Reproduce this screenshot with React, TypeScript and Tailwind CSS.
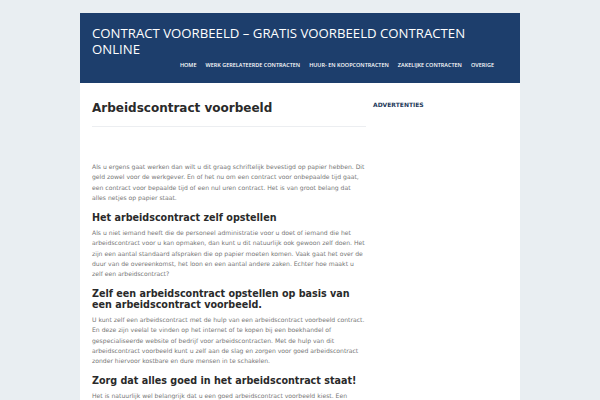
export default function App() {
  const dv = { fontFamily: '"DejaVu Sans", sans-serif' };
  const os = { fontFamily: '"Open Sans", sans-serif' };
  const h3 = "text-[#2a2a2a] text-[9.6px] font-bold leading-[10.7px] mt-[9px] mb-[4.5px]";
  return (
    <div className="w-[600px] h-[400px] bg-[#e9eef2] overflow-hidden">
      <div className="mx-auto w-[440px] pt-[13px]">
        <header className="bg-[#1d3e6c] h-[70px] px-[12px] pt-[13px]" style={os}>
          <h1 className="w-[400px] text-white text-[13.2px] leading-[15.5px] uppercase">
            Contract voorbeeld – Gratis voorbeeld contracten online
          </h1>
          <nav className="flex justify-end gap-[9px] mt-[5px] pr-[14px] text-white text-[5.5px] leading-[7.5px] font-semibold uppercase">
            <span>Home</span>
            <span>Werk gerelateerde contracten</span>
            <span>Huur- en koopcontracten</span>
            <span>Zakelijke contracten</span>
            <span>Overige</span>
          </nav>
        </header>
        <div className="bg-white h-[330px] flex px-[12px] pt-[18px]" style={dv}>
          <main className="w-[274px] shrink-0">
            <h2 className="text-[#2a2a2a] text-[12px] font-bold leading-[14px]">Arbeidscontract voorbeeld</h2>
            <div className="border-b border-[#eceef1] mt-[11px]" />
            <div className="text-[#777] text-[6.1px] leading-[10.4px]">
              <p className="mt-[35px]">
                Als u ergens gaat werken dan wilt u dit graag schriftelijk bevestigd op papier hebben. Dit geld zowel voor de werkgever. En of het nu om een contract voor onbepaalde tijd gaat, een contract voor bepaalde tijd of een nul uren contract. Het is van groot belang dat alles netjes op papier staat.
              </p>
              <h3 className={h3}>Het arbeidscontract zelf opstellen</h3>
              <p className="w-[275.5px]">
                Als u niet iemand heeft die de personeel administratie voor u doet of iemand die het arbeidscontract voor u kan opmaken, dan kunt u dit natuurlijk ook gewoon zelf doen. Het zijn een aantal standaard afspraken die op papier moeten komen. Vaak gaat het over de duur van de overeenkomst, het loon en een aantal andere zaken. Echter hoe maakt u<br />zelf een arbeidscontract?
              </p>
              <h3 className={h3}>Zelf een arbeidscontract opstellen op basis van een arbeidscontract voorbeeld.</h3>
              <p>
                U kunt zelf een arbeidscontract met de hulp van een arbeidscontract voorbeeld contract. En deze zijn veelal te vinden op het internet of te kopen bij een boekhandel of gespecialiseerde website of bedrijf voor arbeidscontracten. Met de hulp van dit arbeidscontract voorbeeld kunt u zelf aan de slag en zorgen voor goed arbeidscontract zonder hiervoor kostbare en dure mensen in te schakelen.
              </p>
              <h3 className={h3}>Zorg dat alles goed in het arbeidscontract staat!</h3>
              <p>
                Het is natuurlijk wel belangrijk dat u een goed arbeidscontract voorbeeld kiest. Een
              </p>
            </div>
          </main>
          <aside className="ml-[7px]">
            <div className="text-[#23395a] text-[6px] font-bold uppercase leading-[8px]">Advertenties</div>
          </aside>
        </div>
      </div>
    </div>
  );
}
